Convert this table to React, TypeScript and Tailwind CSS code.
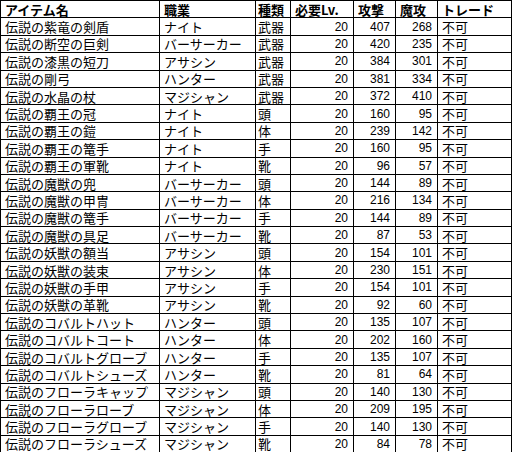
const ROWS: [string, string, string, number, number, number][] = [
  ["伝説の紫竜の剣盾", "ナイト", "武器", 20, 407, 268],
  ["伝説の断空の巨剣", "バーサーカー", "武器", 20, 420, 235],
  ["伝説の漆黒の短刀", "アサシン", "武器", 20, 384, 301],
  ["伝説の剛弓", "ハンター", "武器", 20, 381, 334],
  ["伝説の水晶の杖", "マジシャン", "武器", 20, 372, 410],
  ["伝説の覇王の冠", "ナイト", "頭", 20, 160, 95],
  ["伝説の覇王の鎧", "ナイト", "体", 20, 239, 142],
  ["伝説の覇王の篭手", "ナイト", "手", 20, 160, 95],
  ["伝説の覇王の軍靴", "ナイト", "靴", 20, 96, 57],
  ["伝説の魔獣の兜", "バーサーカー", "頭", 20, 144, 89],
  ["伝説の魔獣の甲冑", "バーサーカー", "体", 20, 216, 134],
  ["伝説の魔獣の篭手", "バーサーカー", "手", 20, 144, 89],
  ["伝説の魔獣の具足", "バーサーカー", "靴", 20, 87, 53],
  ["伝説の妖獣の額当", "アサシン", "頭", 20, 154, 101],
  ["伝説の妖獣の装束", "アサシン", "体", 20, 230, 151],
  ["伝説の妖獣の手甲", "アサシン", "手", 20, 154, 101],
  ["伝説の妖獣の革靴", "アサシン", "靴", 20, 92, 60],
  ["伝説のコバルトハット", "ハンター", "頭", 20, 135, 107],
  ["伝説のコバルトコート", "ハンター", "体", 20, 202, 160],
  ["伝説のコバルトグローブ", "ハンター", "手", 20, 135, 107],
  ["伝説のコバルトシューズ", "ハンター", "靴", 20, 81, 64],
  ["伝説のフローラキャップ", "マジシャン", "頭", 20, 140, 130],
  ["伝説のフローラローブ", "マジシャン", "体", 20, 209, 195],
  ["伝説のフローラグローブ", "マジシャン", "手", 20, 140, 130],
  ["伝説のフローラシューズ", "マジシャン", "靴", 20, 84, 78],
];

const jp = "font-['Noto_Sans_CJK_JP',sans-serif]";
const num = "font-['Liberation_Sans','Noto_Sans_CJK_JP',sans-serif] text-[12px] text-right pr-[5px]";
const cell = "border border-black px-[4px] py-0 leading-none whitespace-nowrap";
const kind = "border border-black px-[2px] py-0 leading-none whitespace-nowrap";

export default function App() {
  return (
    <div className="w-[512px] h-[452px] bg-white overflow-hidden">
      <table className={`table-fixed border-collapse w-[511px] text-[13px] text-black ${jp}`}>
        <colgroup>
          <col className="w-[159px]" />
          <col className="w-[96px]" />
          <col className="w-[35px]" />
          <col className="w-[63px]" />
          <col className="w-[42px]" />
          <col className="w-[42px]" />
          <col className="w-[74px]" />
        </colgroup>
        <thead>
          <tr className="h-[17.4px] font-bold">
            <th className={`${cell} text-left`}>アイテム名</th>
            <th className={`${cell} text-left`}>職業</th>
            <th className={`${kind} text-left`}>種類</th>
            <th className={`${cell} text-left`}>必要Lv.</th>
            <th className={`${cell} text-left`}>攻撃</th>
            <th className={`${cell} text-left`}>魔攻</th>
            <th className={`${cell} text-left`}>トレード</th>
          </tr>
        </thead>
        <tbody>
          {ROWS.map((r, i) => (
            <tr key={i} className="h-[17.4px]">
              <td className={cell}>{r[0]}</td>
              <td className={cell}>{r[1]}</td>
              <td className={kind}>{r[2]}</td>
              <td className={`${cell} ${num}`}>{r[3]}</td>
              <td className={`${cell} ${num}`}>{r[4]}</td>
              <td className={`${cell} ${num}`}>{r[5]}</td>
              <td className={cell}>不可</td>
            </tr>
          ))}
        </tbody>
      </table>
    </div>
  );
}
